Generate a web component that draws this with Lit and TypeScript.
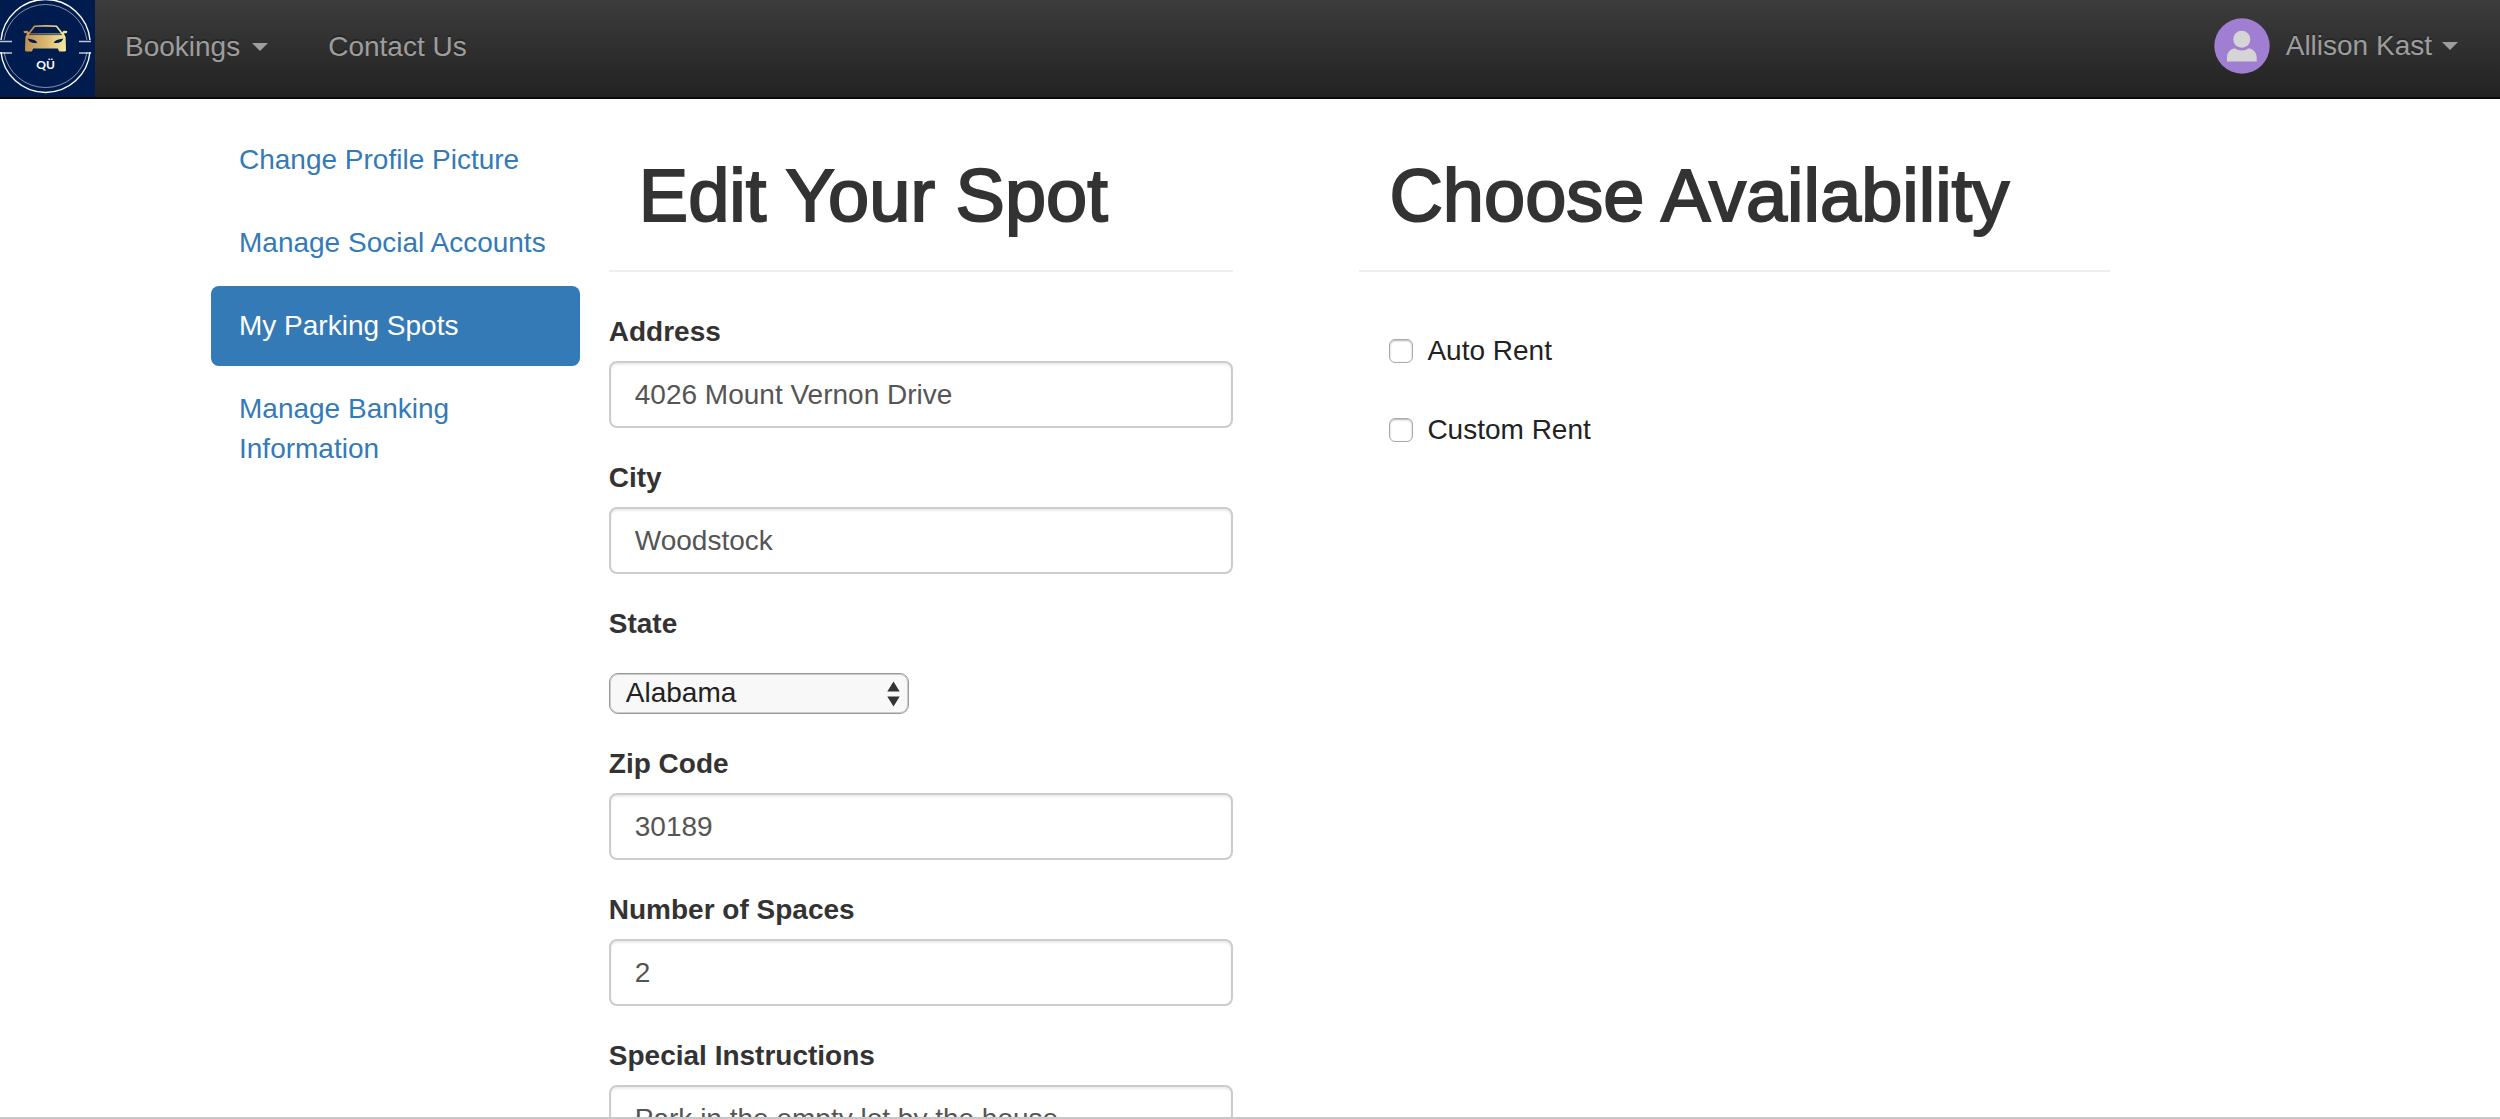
import { LitElement, html, svg, css } from "lit";
import { customElement, property } from "lit/decorators.js";

interface Field {
  id: string;
  label: string;
  value: string;
  options?: string[];
}

const FIELDS: Field[] = [
  { id: "address", label: "Address", value: "4026 Mount Vernon Drive" },
  { id: "city", label: "City", value: "Woodstock" },
  { id: "state", label: "State", value: "Alabama", options: ["Alabama"] },
  { id: "zip", label: "Zip Code", value: "30189" },
  { id: "spaces", label: "Number of Spaces", value: "2" },
  { id: "instructions", label: "Special Instructions", value: "Park in the empty lot by the house" },
];

const LINKS = [
  "Change Profile Picture",
  "Manage Social Accounts",
  "My Parking Spots",
  "Manage Banking Information",
];

const logo = svg`
  <svg viewBox="0 0 95 97" width="95" height="97" role="img" aria-label="QÜ home">
    <defs>
      <linearGradient id="gold" x1="0" x2="1" y1="0" y2="0">
        <stop offset="0" stop-color="#bd8d50" />
        <stop offset="0.5" stop-color="#d9b871" />
        <stop offset="1" stop-color="#f7ec9f" />
      </linearGradient>
    </defs>
    <rect width="95" height="97" fill="#001c4f" />
    <g fill="none" stroke="#fff">
      <path stroke-width="1.4" d="M1 41 A44.7 44.7 0 0 1 90 41 M1 53 A44.7 44.7 0 0 0 90 53"
        transform="translate(0 -1)" />
      <path stroke-width="0.7" opacity="0.75" d="M4 41 A42 42 0 0 1 87 41 M4 53 A42 42 0 0 0 87 53"
        transform="translate(0 -1)" />
      <path stroke-width="1.6" opacity="0.75" d="M0 41.5 H12 M79 41.5 H91 M0 53 H12 M79 53 H91" />
    </g>
    <path fill="none" stroke="url(#gold)" stroke-width="1.6" stroke-linejoin="round"
      d="M28.5 34 L34.5 26.3 Q45.5 25.4 56.5 26.3 L62.5 34" />
    <path fill="url(#gold)" fill-rule="evenodd"
      d="M23.5 31 L27.5 30.8 L29.8 33.4 H61.2 L63.5 30.8 L67.3 31 L66.8 33 L63.8 33.6
         L65.6 37 L66 50 Q66 51.5 64.5 51.5 H60 Q58.7 51.5 58.5 50 L57.8 48.6 H33.2
         L32.5 50 Q32.3 51.5 31 51.5 H26.5 Q25 51.5 25 50 L25.4 37 L27.2 33.6 L24 33 Z
         M27.5 38.5 L29.5 41.5 Q33 43.8 37.3 42.8 Q36 39.5 27.5 38.5 Z
         M63.5 38.5 L61.5 41.5 Q58 43.8 53.7 42.8 Q55 39.5 63.5 38.5 Z" />
    <path stroke="#001c4f" stroke-width="0.7" d="M29 34.6 H62" />
    <text class="logo-text" x="45.5" y="69" text-anchor="middle">QÜ</text>
  </svg>`;

const caret = html`<svg class="caret" viewBox="0 0 16 8" width="16" height="8" aria-hidden="true">
  <path d="M0 0 H16 L8 8 Z" fill="currentColor" />
</svg>`;

@customElement("top-bar")
export class TopBar extends LitElement {
  static styles = css`
    :host {
      display: block;
    }
    .bar {
      display: flex;
      align-items: flex-start;
      background: linear-gradient(#3c3c3c, #222);
      border-bottom: 2px solid #0a0a0a;
      padding-right: 42px;
      color: #9d9d9d;
      font-size: 28px;
      line-height: 40px;
      text-shadow: 0 -2px 0 rgba(0, 0, 0, 0.25);
    }
    .brand,
    .brand svg {
      display: block;
    }
    .logo-text {
      fill: #fff;
      font: 700 12px Lato, "Liberation Sans", sans-serif;
      text-shadow: none;
    }
    .item {
      display: flex;
      align-items: center;
      gap: 12px;
      padding: 27px 30px 0;
      border: 0;
      background: none;
      color: inherit;
      font: inherit;
      text-shadow: inherit;
      text-decoration: none;
      cursor: pointer;
    }
    .user {
      gap: 10px;
      margin-left: auto;
      padding: 18px 0 0;
    }
    .avatar {
      margin-right: 6px;
    }
  `;

  render() {
    return html`
      <nav class="bar" aria-label="Main">
        <a class="brand" href="#home">${logo}</a>
        <button class="item" type="button" aria-haspopup="true">Bookings ${caret}</button>
        <a class="item" href="#contact">Contact Us</a>
        <button class="item user" type="button" aria-haspopup="true">
          <svg class="avatar" viewBox="0 0 56 56" width="56" height="56" aria-hidden="true">
            <circle cx="28" cy="28" r="27.7" fill="#a07fd3" />
            <path fill="#d5d5d5"
              d="M13 43.5 V39 Q13.5 32 20.5 30.3 Q27.8 34.8 35.2 30.3 Q42 32 42.7 39 V43.5 Z" />
            <circle cx="27.8" cy="21.3" r="8.5" fill="#d5d5d5" />
          </svg>
          Allison Kast ${caret}
        </button>
      </nav>
    `;
  }
}

@customElement("side-nav")
export class SideNav extends LitElement {
  @property() current = "";

  static styles = css`
    :host {
      display: block;
    }
    .list {
      display: flex;
      flex-direction: column;
      gap: 3px;
      margin: 0;
      padding: 0;
      list-style: none;
    }
    .link {
      display: block;
      padding: 20px 28px;
      border-radius: 8px;
      color: #337ab7;
      text-decoration: none;
    }
    .active {
      background: #337ab7;
      color: #fff;
    }
  `;

  render() {
    return html`
      <nav aria-label="Account">
        <ul class="list">
          ${LINKS.map((text) => {
            const active = text === this.current;
            return html`<li>
              <a class="link ${active ? "active" : ""}" href="#account"
                aria-current=${active ? "page" : "false"}>${text}</a>
            </li>`;
          })}
        </ul>
      </nav>
    `;
  }
}

@customElement("app-root")
export class AppRoot extends LitElement {
  static styles = css`
    :host {
      display: block;
      box-sizing: border-box;
      height: 100vh;
      overflow: hidden;
      border-bottom: 2px solid #c8c8c8;
      background: #fff;
      color: #333;
      font-family: "Liberation Sans", Arial, sans-serif;
      font-size: 28px;
      line-height: 40px;
    }
    .page {
      display: grid;
      grid-template-columns: 369fr 780fr 751fr;
      padding: 21px 390px 0 211px;
    }
    .spot {
      margin-left: 29px;
      margin-right: 126px;
    }
    .title {
      margin: 36px 0 0;
      padding: 0 30px 34px;
      border-bottom: 2px solid #eee;
      font-size: 74px;
      line-height: 80px;
      font-weight: 400;
      -webkit-text-stroke: 2px #333;
      white-space: nowrap;
    }
    .form {
      display: flex;
      flex-direction: column;
      gap: 30px;
      margin-top: 40px;
    }
    .field {
      display: flex;
      flex-direction: column;
      gap: 9px;
    }
    .choice {
      gap: 29px;
    }
    .label {
      font-weight: 700;
    }
    .input {
      box-sizing: border-box;
      width: 100%;
      height: 67px;
      padding: 0 24px;
      border: 2px solid #ccc;
      border-radius: 8px;
      box-shadow: inset 0 2px 2px rgba(0, 0, 0, 0.075);
      background: #fff;
      color: #555;
      font: inherit;
    }
    .picker {
      position: relative;
      display: flex;
      width: 48%;
    }
    .select {
      appearance: none;
      box-sizing: border-box;
      width: 100%;
      height: 41px;
      padding: 0 40px 2px 16px;
      border: 1px solid #999;
      border-radius: 9px;
      box-shadow: inset 0 0 0 1px #ccc;
      background: #f8f8f8;
      color: #222;
      font: inherit;
      line-height: 36px;
    }
    .arrows {
      position: absolute;
      right: 9px;
      top: 8px;
      pointer-events: none;
    }
    .options {
      display: flex;
      flex-direction: column;
      align-items: flex-start;
      gap: 39px;
      margin-top: 59px;
      padding-left: 30px;
      color: #222;
    }
    .option {
      display: flex;
      align-items: center;
      gap: 14px;
    }
    .box {
      appearance: none;
      box-sizing: border-box;
      width: 24px;
      height: 24px;
      margin: 0;
      border: 1px solid #aaa;
      border-radius: 6px;
      background: #fff;
      box-shadow: inset 0 1px 2px rgba(0, 0, 0, 0.3);
    }
    .box:checked {
      background: #337ab7;
    }
  `;

  private field(f: Field) {
    if (f.options) {
      return html`<div class="field choice">
        <label class="label" for=${f.id}>${f.label}</label>
        <div class="picker">
          <select class="select" id=${f.id}>
            ${f.options.map((o) => html`<option ?selected=${o === f.value}>${o}</option>`)}
          </select>
          <svg class="arrows" viewBox="0 0 13 26" width="13" height="26" aria-hidden="true">
            <path d="M6.5 0.5 L12.7 10.5 H0.3 Z M0.3 15.5 H12.7 L6.5 25.5 Z" fill="#333" />
          </svg>
        </div>
      </div>`;
    }
    return html`<div class="field">
      <label class="label" for=${f.id}>${f.label}</label>
      <input class="input" id=${f.id} type="text" .value=${f.value} />
    </div>`;
  }

  render() {
    return html`
      <top-bar></top-bar>
      <main class="page">
        <side-nav current="My Parking Spots"></side-nav>
        <section class="spot">
          <h1 class="title">Edit Your Spot</h1>
          <form class="form">${FIELDS.map((f) => this.field(f))}</form>
        </section>
        <section>
          <h1 class="title">Choose Availability</h1>
          <div class="options">
            <label class="option"><input class="box" type="checkbox" />Auto Rent</label>
            <label class="option"><input class="box" type="checkbox" />Custom Rent</label>
          </div>
        </section>
      </main>
    `;
  }
}
